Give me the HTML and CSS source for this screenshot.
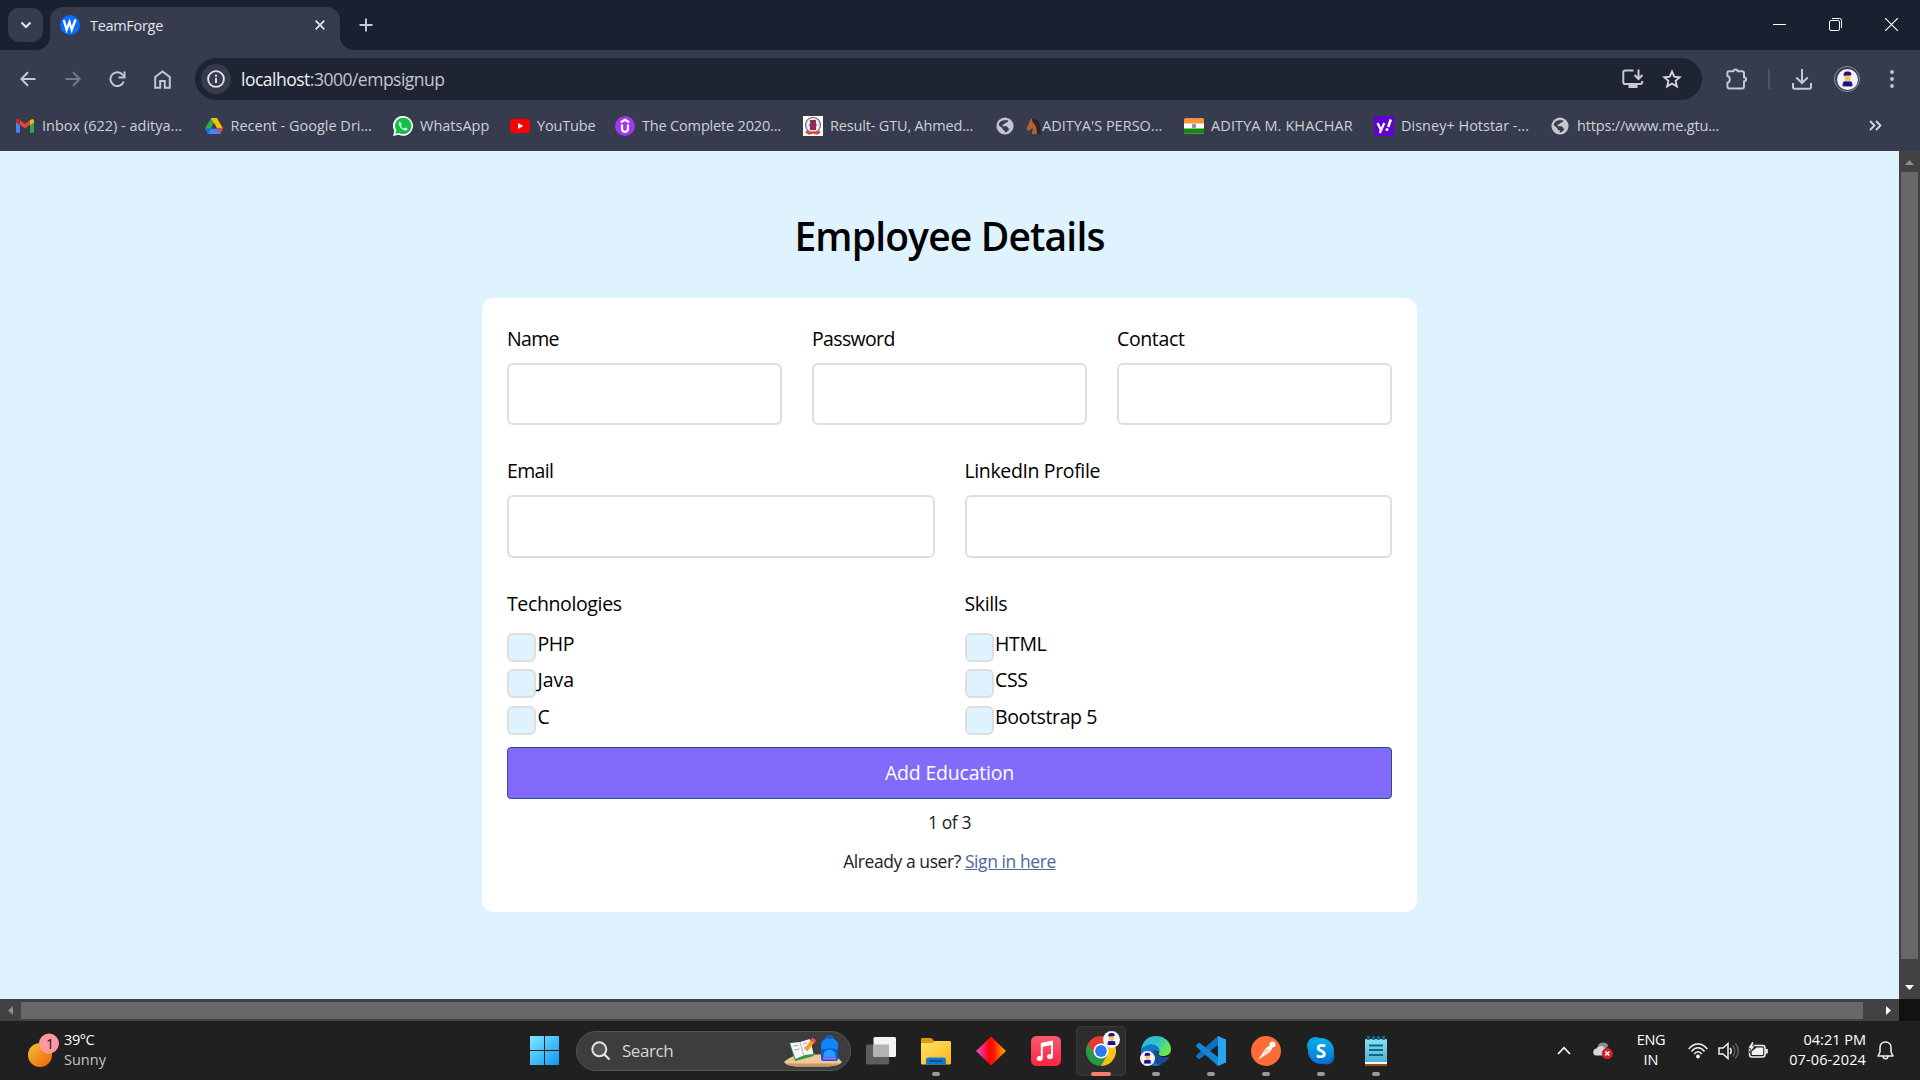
FILE: index.html
```
<!DOCTYPE html>
<html lang="en">
<head>
<meta charset="utf-8">
<title>TeamForge</title>
<link rel="stylesheet" href="styles.css">
</head>
<body>
<svg class="defs" width="0" height="0">
  <defs>
    <linearGradient id="win" x1="0" y1="0" x2="1" y2="1"><stop offset="0" stop-color="#7ee8ff"/><stop offset="1" stop-color="#1095f5"/></linearGradient>
    <linearGradient id="sun" x1="0" y1="0" x2="1" y2="1"><stop offset="0" stop-color="#f2c230"/><stop offset="1" stop-color="#f0600c"/></linearGradient>
    <linearGradient id="dia" x1="0" y1="0" x2="1" y2="0"><stop offset="0" stop-color="#f04ae0"/><stop offset=".45" stop-color="#fe0505"/><stop offset=".6" stop-color="#ff1a00"/><stop offset="1" stop-color="#ffb400"/></linearGradient>
    <linearGradient id="mus" x1="0" y1="0" x2="0" y2="1"><stop offset="0" stop-color="#fd5a72"/><stop offset="1" stop-color="#fb2440"/></linearGradient>
    <linearGradient id="fold" x1="0" y1="0" x2="1" y2="1"><stop offset="0" stop-color="#ffe06a"/><stop offset="1" stop-color="#fcb814"/></linearGradient>
    <linearGradient id="edge" x1="0" y1="0" x2="1" y2=".5"><stop offset="0" stop-color="#2bb2ea"/><stop offset=".55" stop-color="#30c3cf"/><stop offset="1" stop-color="#6ce84a"/></linearGradient>
    <linearGradient id="sky" x1="0" y1="0" x2="0" y2="1"><stop offset="0" stop-color="#06b2f0"/><stop offset="1" stop-color="#0b6fd0"/></linearGradient>
    <linearGradient id="note" x1="0" y1="0" x2="0" y2="1"><stop offset="0" stop-color="#8be0f2"/><stop offset="1" stop-color="#4bb4d4"/></linearGradient>
    <symbol id="globe" viewBox="0 0 18 18"><circle cx="9" cy="9" r="8.600" fill="#c3c6cd"/><path d="M8 3.200h4.300c-.2 2-1.400 2.300-2.800 2.600-.6 1.200-1.600 1.700-2.900 1.800v1.600H10c1.500 0 2 1 2 2.400h1.500c-.7 2.300-2.500 3.500-4.700 3.800v-1.900C7 13.300 6.400 12.500 6.500 11.200L2.600 8C3 5.500 5.200 3.500 8 3.200z" fill="#363b4d"/></symbol>
    <symbol id="avatar" viewBox="0 0 20 20"><circle cx="10" cy="10" r="10" fill="#f2f3fb"/><path d="M5 16.500c0-3.800 1.600-5 5-5s5 1.200 5 5z" fill="#2a6fe8"/><path d="M7.300 5h5.500v4.500c0 2-1.200 2.800-2.700 2.800s-2.800-.8-2.800-2.800z" fill="#f4c35c"/><path d="M6.300 6.500C5.800 3.500 7.500 2 10 2.300c2.500-.3 4.200 1.200 3.700 3.600z" fill="#2b0a80"/><path d="M6 12h8v4.500H6z" fill="#2b0a90"/></symbol>
  </defs>
</svg>
<div class="screen">
  <header class="tabstrip">
    <div class="tab-search"><svg width="12" height="8" viewBox="0 0 12 8"><path d="M1.500 1.500L6 6l4.500-4.500" class="ln"/></svg></div>
    <div class="tab">
      <svg width="20" height="20" viewBox="0 0 20 20"><circle cx="10" cy="10" r="10" fill="#0a6cff"/><path d="M3.800 5l2.800 9.800L9.500 7l2.200 7.800L15.500 4.500" fill="none" stroke="#fff" stroke-width="2.300"/></svg>
      <span class="tab-title">TeamForge</span>
      <svg width="10" height="10" viewBox="0 0 10 10"><path d="M.7.700l8.600 8.600M9.300.700L.7 9.300" stroke="#dfe1e8" stroke-width="1.800"/></svg>
    </div>
    <svg class="newtab" width="14" height="14" viewBox="0 0 14 14"><path d="M7 .5v13M.5 7h13" stroke="#c6cce0" stroke-width="1.900"/></svg>
    <div class="winctl">
      <svg width="13" height="13" viewBox="0 0 13 13"><path d="M0 6.500h13" stroke="#fff" stroke-width="1"/></svg>
      <svg width="13" height="13" viewBox="0 0 13 13"><path d="M3 .5h7.500a2 2 0 0 1 2 2V10" fill="none" stroke="#fff"/><rect x=".5" y="2.500" width="10" height="10" rx="1.500" fill="none" stroke="#fff"/></svg>
      <svg width="13" height="13" viewBox="0 0 13 13"><path d="M0 0l13 13M13 0L0 13" stroke="#fff" stroke-width="1.200"/></svg>
    </div>
  </header>

  <div class="toolbar">
    <div class="nav"><svg width="16" height="16" viewBox="0 0 16 16"><path d="M15.500 8H1.800M8 1.300L1.300 8 8 14.700" class="nv"/></svg></div>
    <div class="nav dim"><svg width="16" height="16" viewBox="0 0 16 16"><path d="M.5 8h13.700M8 1.300L14.700 8 8 14.700" class="nv"/></svg></div>
    <div class="nav"><svg width="17" height="17" viewBox="0 0 17 17"><path d="M14.800 10.500A6.900 6.900 0 1 1 13.800 4L15 5.500" class="nv"/><path d="M15.500 .5v6H9.600" class="nv"/></svg></div>
    <div class="nav"><svg width="17" height="19" viewBox="0 0 17 19"><path d="M1.200 7L8.500 1.500 15.800 7v10.800h-5V11H6.200v6.800h-5z" class="nv"/></svg></div>
    <div class="omnibox">
      <div class="info"><svg width="18" height="18" viewBox="0 0 18 18"><circle cx="9" cy="9" r="7.900" fill="none" stroke="#dfe1e6" stroke-width="1.900"/><path d="M9 8v5M9 4.800v1.900" stroke="#dfe1e6" stroke-width="1.900"/></svg></div>
      <span class="url"><b>localhost</b>:3000/empsignup</span>
      <svg class="install" width="22" height="20" viewBox="0 0 22 20"><path d="M11.500 1.500H3a1.700 1.700 0 0 0-1.700 1.700v10A1.700 1.700 0 0 0 3 15h15.500a1.700 1.700 0 0 0 1.700-1.700V12" fill="none" stroke="#c8cad0" stroke-width="2"/><path d="M6.500 15h9v4h-9z" fill="#c8cad0"/><path d="M16.500 .5v9M12.500 6l4 4 4-4" fill="none" stroke="#c8cad0" stroke-width="2"/></svg>
      <svg width="20" height="20" viewBox="0 0 20 20"><path d="M10 2.500l2.300 5.200 5.500.5-4.200 3.700 1.300 5.600L10 14.500l-4.900 3 1.300-5.600L2.200 8.200l5.500-.5z" fill="none" stroke="#d2d4da" stroke-width="1.900"/></svg>
    </div>
    <div class="actions">
      <svg class="puzzle" width="22" height="22" viewBox="0 0 22 22"><path d="M3 3.200h4.500C7.500.8 11.700.8 11.700 3.200H16c1.300 0 2 .7 2 2v4c2.800.2 2.800 4 0 4.200v5c0 1.300-.7 2-2 2H3.200c-1.200 0-1.800-.7-1.800-1.800v-3.800c3.200-.5 3.200-6.200 0-6.700V5c0-1.200.5-1.800 1.600-1.800z" fill="none" stroke="#c0c7de" stroke-width="2"/></svg>
      <i class="sep"></i>
      <svg class="dl" width="20" height="21" viewBox="0 0 20 21"><path d="M10 0v13.500M4.300 8.500L10 14l5.700-5.500M1 14v4c0 1 .6 1.700 1.700 1.700h14.600c1.100 0 1.700-.7 1.700-1.700v-4" fill="none" stroke="#c0c7de" stroke-width="2"/></svg>
      <div class="profile"><svg width="21" height="21"><use href="#avatar"/></svg></div>
      <svg class="more" width="4" height="18" viewBox="0 0 4 18"><g fill="#c0c7de"><circle cx="2" cy="2" r="1.900"/><circle cx="2" cy="9" r="1.900"/><circle cx="2" cy="16" r="1.900"/></g></svg>
    </div>
  </div>

  <nav class="bookmarks">
    <div class="bm"><svg width="20" height="20" viewBox="0 0 20 20"><path d="M1 4.500V15.500c0 .8.4 1.200 1 1.200h3V7z" fill="#4285f4"/><path d="M19 4.500V15.500c0 .8-.4 1.200-1 1.200h-3V7z" fill="#34a853"/><path d="M1 5c0-2 2-2.400 3.300-1.400L10 8l5.700-4.400V8L10 12.500 5 8.700v-3z" fill="#ea4335"/><path d="M1 5c0-1.800 2-2.500 4-.8v5L1 6.200z" fill="#c5221f"/><path d="M19 5c0-1.800-2-2.500-4-.8v5l4-3z" fill="#fbbc04"/></svg><span>Inbox (622) - aditya...</span></div>
    <div class="bm"><svg width="20" height="20" viewBox="0 0 20 20"><path d="M7 2h6l-3 5.200L4 18 1 12.500z" fill="#34a853"/><path d="M7 2h6l6 10.500h-6z" fill="#fbbc04"/><path d="M4 18l3-5.500h12L16 18z" fill="#4285f4"/><path d="M10 7.300l3 5.200H7z" fill="#363b4d"/><path d="M1 12.500h6L4 18z" fill="#1a6fe0"/><path d="M13 12.500h6L16 18z" fill="#ea4335"/></svg><span>Recent - Google Dri...</span></div>
    <div class="bm"><svg width="20" height="20" viewBox="0 0 20 20"><path d="M10 0a9.900 9.900 0 1 1-4.500 18.700L0 20l1.400-5A9.900 9.900 0 0 1 10 0z" fill="#fff"/><path d="M10.200 1.700a8.200 8.200 0 1 1-4.300 15.200l-3.500 1 1-3.400a8.200 8.200 0 0 1 6.800-12.800z" fill="#12c046"/><path d="M7 5.500c-2.500 1.500-.5 5 1.500 7 2.500 2.300 5.500 2.800 6 .3l-2.300-1.300-1.200 1.200c-1.500-.6-2.700-1.800-3.300-3.200l1-1.200z" fill="#fff"/></svg><span>WhatsApp</span></div>
    <div class="bm tight"><svg width="20" height="20" viewBox="0 0 20 20"><rect x="0" y="3" width="20" height="14" rx="3.500" fill="#f00"/><path d="M8 7l5.300 3L8 13z" fill="#fff"/></svg><span>YouTube</span></div>
    <div class="bm tight"><svg width="20" height="20" viewBox="0 0 20 20"><circle cx="10" cy="10" r="10" fill="#a435f0"/><path d="M5.800 6.200L10 3.800l4.200 2.400M7 8.500v4.300c0 4 6 4 6 0V8.500" fill="none" stroke="#fff" stroke-width="2.200"/></svg><span>The Complete 2020...</span></div>
    <div class="bm tight"><svg width="20" height="20" viewBox="0 0 20 20"><path d="M0 0h20v20H0z" fill="#fff"/><circle cx="10" cy="9" r="7.500" fill="#e8e8f4" stroke="#6c6580" stroke-width="1.200"/><path d="M7 4h6v10H7z" fill="#b8283c"/><path d="M6 9h8M8 6h4M7 12h6" stroke="#38358a" stroke-width="1.200"/><path d="M3 15.500l3 2 4-1 4 1 3-2" fill="none" stroke="#d8402c" stroke-width="2.200"/></svg><span>Result- GTU, Ahmed...</span></div>
    <div class="bm"><svg width="18" height="18"><use href="#globe"/></svg><span class="horse"><svg width="15" height="16" viewBox="0 0 15 16"><path d="M4 2l2-2 1.500 2c4 0 6 4 6.500 14H6c-.5-2.500.5-4 1-5.500-2 0-2.500.5-3.500 2C2 13 .5 12 .5 10.500 2 8 3 5 4 2z" fill="#b0603a"/><path d="M6 .5c6-.5 9 4 9 15.500h-4c0-5-1-9-4.500-12z" fill="#33231f"/></svg></span><span>ADITYA'S PERSO...</span></div>
    <div class="bm wide"><svg width="20" height="20" viewBox="0 0 20 20"><rect y="2.500" width="20" height="15" rx="1.500" fill="#fff"/><path d="M0 7.500V4c0-1 .5-1.500 1.500-1.500h17c1 0 1.500.5 1.500 1.500v3.500z" fill="#ff9430"/><path d="M0 12.500V16c0 1 .5 1.500 1.500 1.500h17c1 0 1.500-.5 1.500-1.500v-3.500z" fill="#138808"/><circle cx="10" cy="10" r="2.300" fill="#8d8dc8"/></svg><span>ADITYA M. KHACHAR</span></div>
    <div class="bm"><svg width="20" height="20" viewBox="0 0 20 20"><path d="M0 0h20v20H0z" fill="#5f01d1"/><path d="M3.500 7l3.200 6.500M10.300 7L5.800 17" stroke="#fff" stroke-width="2.300"/><path d="M16.800 3.500l-2.600 7.500" stroke="#fff" stroke-width="2.600"/><circle cx="13" cy="13.600" r="1.500" fill="#fff"/></svg><span>Disney+ Hotstar -...</span></div>
    <div class="bm tight last"><svg width="18" height="18"><use href="#globe"/></svg><span>https://www.me.gtu...</span></div>
    <svg width="13" height="11" viewBox="0 0 13 11"><path d="M1 1l4.500 4.500L1 10M7 1l4.500 4.500L7 10" fill="none" stroke="#d5d7de" stroke-width="1.800"/></svg>
  </nav>

  <div class="viewport">
    <main class="page">
      <h1 class="title">Employee Details</h1>
      <form class="card">
        <div class="row three">
          <label class="field"><span class="snug">Name</span><input type="text"></label>
          <label class="field"><span class="snug">Password</span><input type="text"></label>
          <label class="field"><span>Contact</span><input type="text"></label>
        </div>
        <div class="row two">
          <label class="field"><span class="snug">Email</span><input type="text"></label>
          <label class="field"><span>LinkedIn Profile</span><input type="text"></label>
        </div>
        <div class="row two">
          <div class="group">
            <span class="legend">Technologies</span>
            <label class="check"><i class="box"></i><span>PHP</span></label>
            <label class="check"><i class="box"></i><span class="loose">Java</span></label>
            <label class="check"><i class="box"></i><span>C</span></label>
          </div>
          <div class="group">
            <span class="legend">Skills</span>
            <label class="check"><i class="box"></i><span>HTML</span></label>
            <label class="check"><i class="box"></i><span>CSS</span></label>
            <label class="check"><i class="box"></i><span>Bootstrap 5</span></label>
          </div>
        </div>
        <button class="add" type="button">Add Education</button>
        <p class="step">1 of 3</p>
        <p class="signin">Already a user? <a href="#">Sign in here</a></p>
      </form>
    </main>
    <div class="vbar">
      <svg width="9" height="5" viewBox="0 0 9 5"><path d="M4.500 0L9 5H0z" fill="#8b8b8b"/></svg>
      <i class="vthumb"></i>
      <svg width="9" height="5" viewBox="0 0 9 5"><path d="M4.500 5L9 0H0z" fill="#fff"/></svg>
    </div>
    <div class="hbar">
      <svg width="5" height="9" viewBox="0 0 5 9"><path d="M0 4.500L5 0v9z" fill="#8b8b8b"/></svg>
      <i class="hthumb"></i>
      <svg width="5" height="9" viewBox="0 0 5 9"><path d="M5 4.500L0 0v9z" fill="#fff"/></svg>
    </div>
    <div class="corner"></div>
  </div>

  <footer class="taskbar">
    <div class="weather">
      <svg width="32" height="36" viewBox="0 0 32 36"><circle cx="12" cy="22" r="12" fill="url(#sun)"/><circle cx="21" cy="10.500" r="10" fill="#fb98a0"/><text x="18" y="16" class="cnt">1</text></svg>
      <div class="wtext"><span class="deg">39°C</span><span class="mute">Sunny</span></div>
    </div>
    <svg width="29" height="29" viewBox="0 0 29 29"><path d="M0 0h14v14H0zM15 0h14v14H15zM0 15h14v14H0zM15 15h14v14H15z" fill="url(#win)"/></svg>
    <div class="search">
      <svg width="20" height="20" viewBox="0 0 20 20"><circle cx="8.300" cy="8.300" r="7" fill="#555" stroke="#e6e6e6" stroke-width="2"/><path d="M13.500 13.500l5 5" stroke="#e6e6e6" stroke-width="2.200"/></svg>
      <span>Search</span>
      <svg class="art" width="58" height="32" viewBox="0 0 58 32"><path d="M0 27c5-4 9-7 19-7.500h26c5 0 9 3 13 7.500-3 3.500-9 4.500-17 4.500H15C7 31.500 3 30.500 0 27z" fill="#f0c896"/><path d="M2 28.500c3 2 7 3 13 3h26c7 0 12-1 15-3z" fill="#c99a66"/><path d="M6 10l20-5 4 16-19 5z" fill="#2f9a48"/><path d="M6 8l10-1 10-3 3.500 15-9 1-9 4z" fill="#f6f4fa"/><path d="M16 7l4 14" stroke="#b9b3cc" stroke-width="1"/><path d="M9.500 11l5-.8M10.500 15l5-1M19 9l4-1M20 13l5-1" stroke="#aaa5b8" stroke-width="1"/><path d="M22 15l7.500-10" stroke="#f8a01c" stroke-width="4"/><path d="M28.500 7l2-3" stroke="#ef5350" stroke-width="4.500"/><path d="M42 4c0-4 7-4 7 0" fill="none" stroke="#1660d8" stroke-width="2"/><path d="M37 10c0-9 17-9 17 0v13c0 2-1 3-3 3H40c-2 0-3-1-3-3z" fill="#0d88fa"/><path d="M37 15c5-2 12-2 17 0v8c0 2-1 3-3 3H40c-2 0-3-1-3-3z" fill="#0a58d4"/><path d="M39.500 20c0-7 12-7 12 0v2h-12z" fill="#2a9bff"/><path d="M39 23.500h13" stroke="#b070f0" stroke-width="2"/></svg>
    </div>
    <div class="apps">
      <div class="app"><svg width="30" height="30" viewBox="0 0 30 30"><rect x="0" y="8.500" width="23" height="20" rx="1.500" fill="#5e5e5e"/><rect x="7.500" y="1" width="22.500" height="20" rx="1.500" fill="#f3f3f3"/><path d="M7.500 8.500H23V21H7.500z" fill="#b3b3b3"/></svg></div>
      <div class="app"><svg width="30" height="30" viewBox="0 0 30 30"><path d="M0 8V3.500C0 2.500.6 2 1.500 2H9c1.500 0 2 .6 3 1.800L14 6v4z" fill="#dc9a0a"/><path d="M0 7h11l3-2h14.500c1 0 1.500.5 1.500 1.500V27c0 1-.5 1.500-1.500 1.500h-27C.5 28.500 0 28 0 27z" fill="url(#fold)"/><path d="M5 28.500V24c0-1.600.8-2.500 2.500-2.500h15c1.600 0 2.500.9 2.500 2.500v4.500z" fill="#0f78d0"/><path d="M8.500 25h13" stroke="#0a437c" stroke-width="1.300"/></svg><i class="dot"></i></div>
      <div class="app"><svg width="30" height="30" viewBox="0 0 30 30"><path d="M15 0.500L30 15 15 29.500 0 15z" fill="url(#dia)"/></svg></div>
      <div class="app"><svg width="30" height="30" viewBox="0 0 30 30"><rect width="30" height="30" rx="5.500" fill="url(#mus)"/><path d="M10.800 22V8.200L21 6v14" fill="none" stroke="#fff" stroke-width="2"/><path d="M10 7l12-2.500v4.300l-12 2.400z" fill="#fff"/><ellipse cx="8.700" cy="22.500" rx="3" ry="2.500" fill="#fff"/><ellipse cx="19" cy="20.500" rx="3" ry="2.500" fill="#fff"/></svg></div>
      <div class="app active"><svg width="30" height="30" viewBox="0 0 30 30"><path d="M15 15L2 7.500A15 15 0 0 1 28 7.500H15z" fill="#e33b2e"/><path d="M15 15V7.500h13A15 15 0 0 1 15 30z" fill="#fbc116"/><path d="M2 7.500A15 15 0 0 0 15 30l6.500-11.200L15 15z" fill="#259b48"/><path d="M2 7.500l6.500 11.200L15 7.500z" fill="#e33b2e"/><circle cx="15" cy="15" r="7.500" fill="#fff"/><circle cx="15" cy="15" r="5.900" fill="#2b78ee"/></svg><svg class="badge-tr" width="17" height="17"><use href="#avatar"/></svg><i class="dot"></i></div>
      <div class="app"><svg width="30" height="30" viewBox="0 0 30 30"><path d="M0 15C1 5 7 0 15 0c9 0 15 6.500 15 13 0 5-3.500 7-7.500 7-5 0-5.500-1.800-4.500-3.500C20 11 13 7.500 8 9c-4 1-7 3-8 6z" fill="url(#edge)"/><path d="M0 15c2-5 8-7.500 13-6 4 1 6 4 5 7-4-3-8 .5-7 5 1 4.500 6 8 10 7.500C11 33 0 26 0 15z" fill="#1378cf"/><path d="M11 21c-1-5 2-7.500 5-6 0 4 4 8 12.500 5.500C24 30 13 31 11 21z" fill="#174b95"/></svg><svg class="badge-bl" width="15" height="15"><use href="#avatar"/></svg><i class="dot"></i></div>
      <div class="app"><svg width="30" height="30" viewBox="0 0 30 30"><path d="M22 0l8 3.500v23L22 30z" fill="#28a3f0"/><path d="M22 0v9L4 22.700c-.8.600-1.400.5-2 0L.5 21c-.6-.6-.6-1.400 0-2z" fill="#0f70bd"/><path d="M22 30v-9L4 7.300c-.8-.6-1.400-.5-2 0L.5 9c-.6.600-.6 1.400 0 2z" fill="#1486d2"/></svg><i class="dot"></i></div>
      <div class="app"><svg width="30" height="30" viewBox="0 0 30 30"><circle cx="15" cy="15" r="15" fill="#ff6c37"/><circle cx="21.500" cy="8.500" r="3" fill="#fff"/><path d="M19 9.500l2.500 2.500c-2 4-5 6-8 7.500L7 24l4-6c2-4 4-6.500 8-8.500z" fill="#fff"/><path d="M11 16.500l6-3M13.500 18l5-4" stroke="#ff9a76" stroke-width=".8"/></svg><i class="dot"></i></div>
      <div class="app"><svg width="30" height="30" viewBox="0 0 30 30"><circle cx="9.500" cy="9.500" r="8.500" fill="#0a9de6"/><circle cx="20.500" cy="20.500" r="8" fill="#0a66c8"/><circle cx="15" cy="15" r="13" fill="url(#sky)"/><text x="15" y="21.500" class="sk">S</text></svg><i class="dot"></i></div>
      <div class="app"><svg width="30" height="30" viewBox="0 0 30 30"><path d="M4 26h22v4H4z" fill="#9a4d12"/><path d="M4 25h22v3H4z" fill="#f4f4f4"/><rect x="4" y="3" width="22" height="23" rx="1" fill="url(#note)"/><path d="M8 9.500h14M8 14h14M8 19h14" stroke="#0b6a8c" stroke-width="2"/><path d="M7.500 0v4M12.500 0v4M17.500 0v4M22.500 0v4" stroke="#0f6f8f" stroke-width="2.800"/></svg><i class="dot"></i></div>
    </div>
    <div class="tray">
      <svg width="14" height="9" viewBox="0 0 14 9"><path d="M1 8l6-6.300L13 8" fill="none" stroke="#fff" stroke-width="1.700"/></svg>
      <svg class="cloud" width="20" height="17" viewBox="0 0 20 17"><path d="M5 3C7-.5 14-.5 15.500 4L9 9z" fill="#8d8d8d"/><path d="M3 13.500c-4-.5-3.500-7 .5-7C5.500 3 11 3.500 12 7l4 6.500z" fill="#d8d8d8"/><circle cx="14.300" cy="11.500" r="5.500" fill="#d9202a"/><path d="M12.300 9.500l4 4M16.300 9.500l-4 4" stroke="#fff" stroke-width="1.500"/></svg>
      <div class="lang"><span class="deg">ENG</span><span>IN</span></div>
      <svg class="wifi" width="20" height="16" viewBox="0 0 20 16"><g fill="none" stroke="#f2f2f2" stroke-width="1.500"><path d="M.7 6C6-.7 14-.7 19.300 6M3.500 8.500C7.500 3.500 12.500 3.500 16.500 8.500M6.300 11C8.500 8 11.500 8 13.700 11"/></g><circle cx="10" cy="13.500" r="1.900" fill="#f2f2f2"/></svg>
      <svg class="vol" width="21" height="18" viewBox="0 0 21 18"><path d="M1 6h4l5-4.500v15L5 12H1z" fill="none" stroke="#f2f2f2" stroke-width="1.500"/><path d="M12 6c1.500 1.800 1.500 4.200 0 6" fill="none" stroke="#f2f2f2" stroke-width="1.500"/><path d="M14.500 3.500c3 3.300 3 7.700 0 11M17.300 1.500c4 4.500 4 10.500 0 15" fill="none" stroke="#6a6a6a" stroke-width="1.300"/></svg>
      <svg class="bat" width="20" height="17" viewBox="0 0 20 17"><rect x="1.500" y="3.500" width="15.500" height="11.500" rx="2.500" fill="none" stroke="#f2f2f2" stroke-width="1.500"/><path d="M17.500 7h2.300v4.500h-2.300z" fill="#f2f2f2"/><path d="M3.700 13V9.500l5-4h6.500V13z" fill="#f2f2f2"/><path d="M4-.5L0 6.500h2.500L1.500 11 7 4H4.500L6 .5z" fill="#f2f2f2" stroke="#202020" stroke-width=".7"/></svg>
      <div class="clock"><span>04:21 PM</span><span class="date">07-06-2024</span></div>
      <svg class="bell" width="17" height="19" viewBox="0 0 17 19"><path d="M8.500 1C5.200 1 3 3.500 3 6.500V11l-2 4h15l-2-4V6.500C14 3.500 11.800 1 8.500 1zM6 15.500c.5 3 4.500 3 5 0" fill="none" stroke="#f2f2f2" stroke-width="1.500" stroke-linejoin="round"/></svg>
    </div>
  </footer>
</div>
</body>
</html>
```
FILE: styles.css
```
* { box-sizing: border-box; }
body { margin: 0; overflow: hidden; font-family: "Open Sans", "Noto Sans", sans-serif; }
svg { display: block; flex: none; }
.defs { position: absolute; }
.screen { width: 1920px; height: 1080px; display: grid; grid-template-rows: 50px 50px 51px 870px 59px; background: #363b4d; }

/* tab strip */
.tabstrip { display: flex; align-items: flex-end; background: #182130; padding-left: 8px; }
.tab-search { width: 35px; height: 34px; margin-bottom: 8px; border-radius: 11px; background: #363b4d; display: grid; place-items: center; }
.ln { fill: none; stroke: #e3e5ec; stroke-width: 2; }
.tab { position: relative; width: 290px; height: 43px; margin-left: 7px; padding: 0 15px 7px 10px; border-radius: 13px 13px 0 0; background: #363b4d; display: flex; align-items: center; }
.tab::before, .tab::after { content: ""; position: absolute; bottom: 0; width: 13px; height: 13px; }
.tab::before { left: -13px; background: radial-gradient(circle at 0 0, transparent 12.500px, #363b4d 13px); }
.tab::after { right: -13px; background: radial-gradient(circle at 100% 0, transparent 12.500px, #363b4d 13px); }
.tab-title { margin-left: 10px; margin-right: auto; font-size: 14.500px; letter-spacing: -.31px; color: #e3e5ec; }
.newtab { margin: 0 0 18px 19px; }
.winctl { margin-left: auto; display: flex; gap: 43px; padding: 0 22px 19px 0; }

/* toolbar */
.toolbar { display: flex; align-items: flex-end; padding-left: 5px; }
.nav { width: 45px; height: 42px; display: grid; place-items: center; }
.nav.dim { opacity: .45; }
.nv { fill: none; stroke: #c0c7de; stroke-width: 2; }
.omnibox { width: 1507px; height: 42px; margin-left: 10px; padding: 0 20px 0 6px; border-radius: 21px; background: #1f2433; display: flex; align-items: center; }
.info { width: 30px; height: 30px; border-radius: 50%; background: #363b4d; display: grid; place-items: center; }
.url { margin-left: 10px; margin-right: auto; font-size: 17.500px; letter-spacing: -.5px; color: #c4c6cc; white-space: nowrap; }
.url b { font-weight: 400; color: #f0f1f4; }
.install { margin-right: 18px; }
.actions { flex: 1; height: 42px; display: flex; align-items: center; }
.puzzle { margin-left: 24px; }
.sep { width: 2px; height: 20px; margin-left: 20px; background: #4d5468; }
.dl { margin-left: 22px; }
.profile { width: 26px; height: 26px; margin-left: 22px; border: 1px solid #8b90a2; border-radius: 50%; display: grid; place-items: center; }
.more { margin-left: 30px; }

/* bookmarks */
.bookmarks { display: grid; grid-template-columns: 188.500px 189.500px 117px 105px 188px 193px 188px 190px 176px 319px auto; align-items: center; padding-left: 15px; font-size: 14.500px; color: #ced0d7; }
.bm { display: flex; align-items: center; gap: 7px; white-space: nowrap; }
.bm.tight { letter-spacing: -.17px; }
.bm.wide { letter-spacing: .1px; }
.bm.last { gap: 8px; padding-left: 1px; }
.horse { margin: 0 -6px 0 5px; }

/* page */
.viewport { display: grid; grid-template: 848px 22px / 1899px 21px; }
.page { background: #dff3ff; display: flex; flex-direction: column; align-items: center; padding-top: 55px; }
.title { margin: 0; height: 92px; font-size: 39px; line-height: 60px; letter-spacing: -.85px; font-weight: 580; color: #000; }
.card { width: 935px; height: 614px; padding: 25px; border-radius: 12px; background: #fff; font-size: 19.500px; font-weight: 370; letter-spacing: -.37px; line-height: 32px; color: #000; }
.row { display: grid; gap: 30px; }
.three { grid-template-columns: repeat(3, 1fr); }
.two { grid-template-columns: repeat(2, 1fr); }
.field { display: flex; flex-direction: column; align-items: flex-start; margin-bottom: 30px; }
.field input { width: 100%; height: 62.500px; margin-top: 8px; border: 2px solid #dedede; border-radius: 6px; background: #fff; }
.three .field input { height: 62px; }
.snug { letter-spacing: -.65px; }
.loose { letter-spacing: 0; }
.group { display: flex; flex-direction: column; align-items: flex-start; }
.legend { margin-bottom: 5.500px; }
.check { height: 36.500px; display: flex; align-items: flex-end; gap: 1.500px; line-height: 36px; }
.box { width: 29px; height: 29px; border: 2px solid #dedede; border-radius: 6px; background: #dff3ff; }
.add { display: block; width: 100%; height: 52px; margin-top: 12px; padding: 0; border: 1px solid #2f4f80; border-radius: 4px; background: #826afb; color: #fff; font: 19.500px "Open Sans", sans-serif; letter-spacing: -.2px; }
.step, .signin { margin: 0; text-align: center; font-size: 17.500px; line-height: 30px; letter-spacing: -.43px; color: #222; }
.step { margin-top: 8px; }
.signin { margin-top: 9px; }
.signin a { color: #4d6898; }

/* scrollbars */
.vbar, .hbar { background: #424242; display: flex; align-items: center; }
.vbar { flex-direction: column; padding-top: 9px; }
.vthumb { width: 17px; height: 787px; margin: 7px 0 26px; background: #686868; }
.hbar { padding: 0 8px; justify-content: space-between; }
.hthumb { width: 1842px; height: 17px; margin-right: 15px; background: #686868; }
.corner { background: #121212; }

/* taskbar */
.taskbar { background: #202020; display: flex; align-items: center; color: #fff; }
.weather { width: 530px; padding-left: 28px; display: flex; align-items: center; }
.cnt { font-size: 14px; fill: #201010; }
.wtext { margin-left: 4px; padding-bottom: 2px; display: flex; flex-direction: column; align-items: flex-start; font-size: 14.500px; line-height: 20px; }
.deg { letter-spacing: -.4px; }
.mute { color: #c4c4c4; }
.search { width: 275px; height: 40px; margin-left: 17px; padding: 0 8px 0 14px; border-radius: 20px; border: 1px solid #555; background: #3d3d3d; display: flex; align-items: center; gap: 11px; font-size: 17px; letter-spacing: -.45px; color: #d6d6d6; }
.art { margin-left: auto; }
.apps { display: flex; padding-left: 2px; }
.app { position: relative; width: 55px; height: 50px; display: grid; place-items: center; }
.active::before { content: ""; position: absolute; inset: 0 2.500px; border-radius: 5px; border: 1px solid #393939; background: #2d2d2d; }
.active svg { position: relative; }
.dot { position: absolute; left: 50%; bottom: 0; width: 8px; height: 4px; margin-left: -4px; border-radius: 2px; background: #9a9a9a; }
.active .dot { width: 20px; margin-left: -10px; background: #f48268; }
.active .badge-tr { position: absolute; left: 30px; top: 5px; }
.badge-bl { position: absolute; left: 12px; top: 25px; }
.sk { font: 700 19px "Open Sans", sans-serif; fill: #fff; text-anchor: middle; }
.tray { margin-left: auto; display: flex; align-items: center; font-size: 14.500px; line-height: 20px; padding-right: 26px; }
.cloud { margin-left: 22px; }
.lang { width: 30px; margin-left: 23px; padding-bottom: 1px; display: flex; flex-direction: column; align-items: center; }
.wifi { margin-left: 22px; }
.vol { margin-left: 10px; }
.bat { margin-left: 9px; }
.clock { width: 98px; padding-bottom: 2px; display: flex; flex-direction: column; align-items: flex-end; }
.date { letter-spacing: .12px; }
.bell { margin-left: 11px; }
```
